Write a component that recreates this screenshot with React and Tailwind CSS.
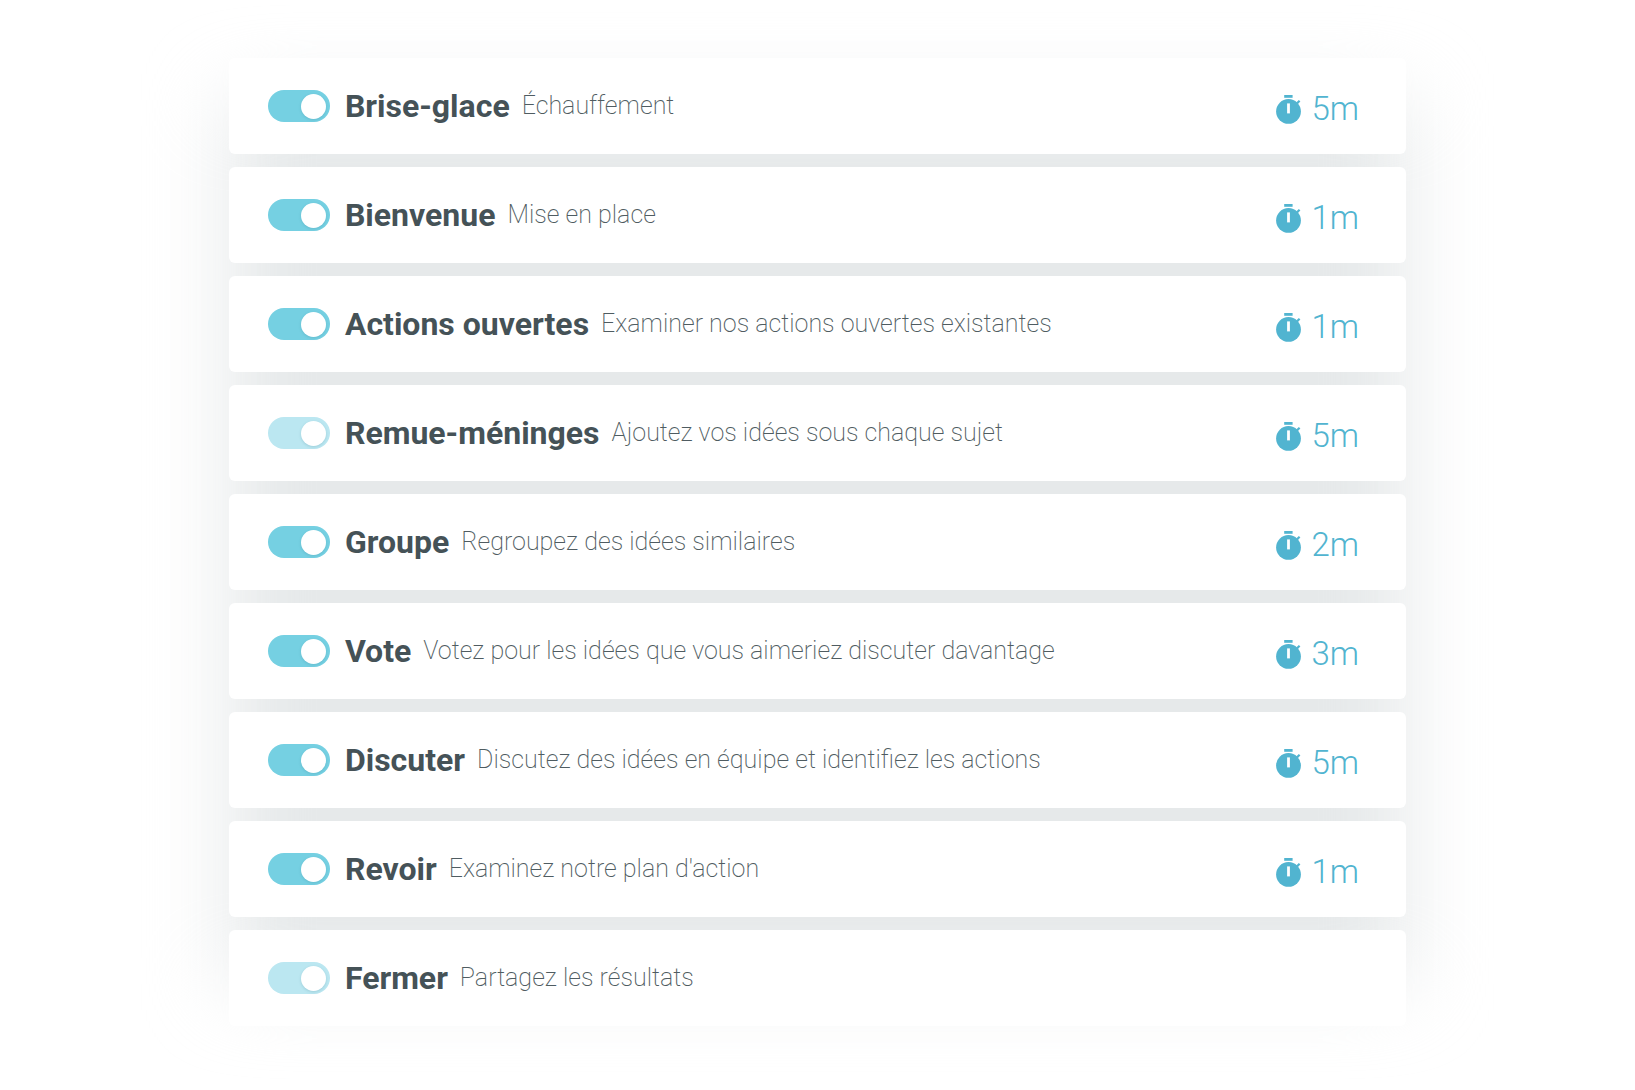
import React, { useState } from 'react'

const initialSteps = [
  { id: 'icebreaker', title: 'Brise-glace', text: 'Échauffement', time: '5m', on: true },
  { id: 'welcome', title: 'Bienvenue', text: 'Mise en place', time: '1m', on: true },
  { id: 'actions', title: 'Actions ouvertes', text: 'Examiner nos actions ouvertes existantes', time: '1m', on: true },
  { id: 'brainstorm', title: 'Remue-méninges', text: 'Ajoutez vos idées sous chaque sujet', time: '5m', on: true, locked: true },
  { id: 'group', title: 'Groupe', text: 'Regroupez des idées similaires', time: '2m', on: true },
  { id: 'vote', title: 'Vote', text: 'Votez pour les idées que vous aimeriez discuter davantage', time: '3m', on: true },
  { id: 'discuss', title: 'Discuter', text: 'Discutez des idées en équipe et identifiez les actions', time: '5m', on: true },
  { id: 'review', title: 'Revoir', text: "Examinez notre plan d'action", time: '1m', on: true },
  { id: 'close', title: 'Fermer', text: 'Partagez les résultats', on: true, locked: true },
]

function StopwatchIcon() {
  return (
    <svg viewBox="0 0 25 29" className="h-[29px] w-[25px] shrink-0" aria-hidden="true">
      <path fill="currentColor" d="M8.2 0h8.4v2.8H8.2z" />
      <path stroke="currentColor" strokeWidth="2.2" d="M20 9.4l3.6-3.6" />
      <circle cx="12.5" cy="16.4" r="12.4" fill="currentColor" />
      <path fill="#fff" d="M11.1 8.4h2.8v10h-2.8z" />
    </svg>
  )
}

function Toggle({ id, checked, disabled, onChange }) {
  return (
    <input
      id={id}
      type="checkbox"
      role="switch"
      checked={checked}
      disabled={disabled}
      onChange={onChange}
      className="flex h-8 w-[62px] shrink-0 cursor-pointer appearance-none items-center rounded-full bg-gray-300 px-1 before:size-[25px] before:rounded-full before:bg-white before:shadow-[0_1px_3px_rgba(40,110,130,0.2)] before:content-[''] checked:justify-end checked:bg-[#75d0e2] disabled:cursor-default disabled:checked:bg-[#bbe7f1]"
    />
  )
}

function StepRow({ step, onToggle }) {
  return (
    <li className="flex min-h-24 items-center rounded-md bg-white pr-[47px] pl-[39px]">
      <Toggle id={step.id} checked={step.on} disabled={step.locked} onChange={onToggle} />
      <label htmlFor={step.id} className="ml-[15px] flex flex-1 items-center gap-3">
        <span className="text-[32px] leading-10 font-bold text-[#455257]">{step.title}</span>
        <span className="text-[25px] leading-10 font-extralight text-[#4f5c61]">{step.text}</span>
      </label>
      {step.time && (
        <div className="flex items-center gap-[11px] pt-1.5 text-[#51b4d0]">
          <StopwatchIcon />
          <span className="text-[33px] leading-10 font-light">{step.time}</span>
        </div>
      )}
    </li>
  )
}

export default function App() {
  const [steps, setSteps] = useState(initialSteps)

  const toggle = (id) => {
    setSteps((list) => list.map((s) => (s.id === id ? { ...s, on: !s.on } : s)))
  }

  return (
    <main className="min-h-screen overflow-hidden bg-white px-[14%] py-[58px] font-[Roboto,sans-serif]">
      {/* one soft shadow shared by the whole stack of cards */}
      <div className="relative isolate before:absolute before:inset-x-0 before:inset-y-[42px] before:-z-10 before:bg-[#e6e9ea] before:blur-[40px] before:content-['']">
        <ul className="flex flex-col gap-[13px]">
          {steps.map((step) => (
            <StepRow key={step.id} step={step} onToggle={() => toggle(step.id)} />
          ))}
        </ul>
      </div>
    </main>
  )
}
